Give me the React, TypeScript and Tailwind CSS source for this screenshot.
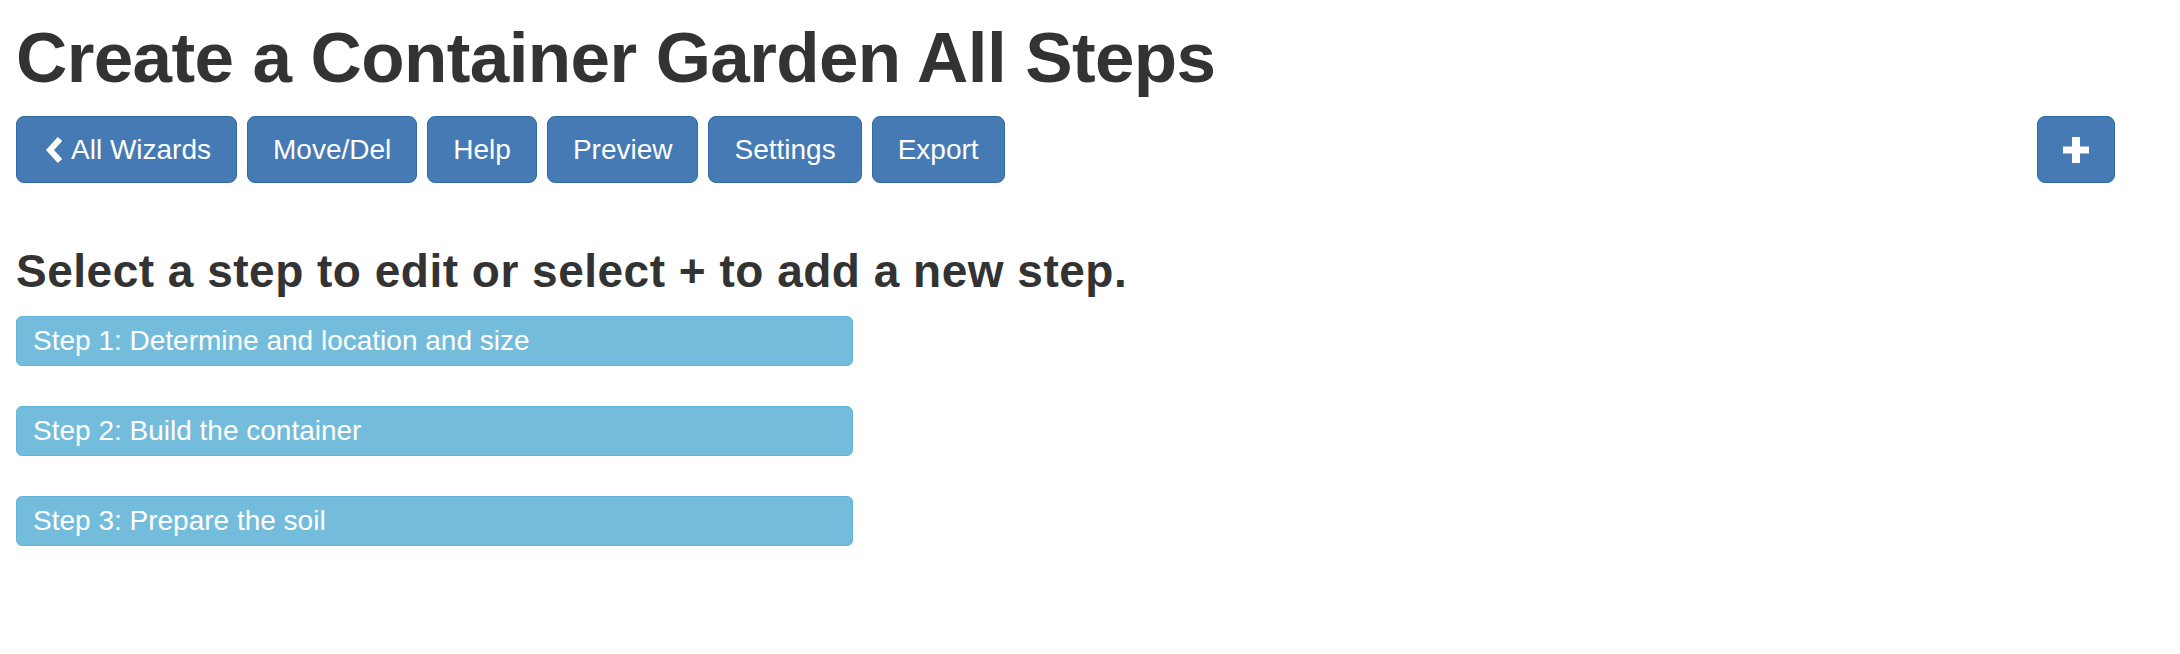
const buttons = ["Move/Del", "Help", "Preview", "Settings", "Export"];

const steps = [
  "Step 1: Determine and location and size",
  "Step 2: Build the container",
  "Step 3: Prepare the soil",
];

const btn =
  "h-[67px] px-[25px] flex items-center rounded-[8px] border border-[#2e6da4] bg-[#457ab4] text-white text-[28px] leading-none";

export default function App() {
  return (
    <div className="min-h-screen bg-white pl-4 pr-[65px] pt-[19px] text-[#333] font-['Liberation_Sans',Arial,sans-serif]">
      <h1 className="text-[71px] leading-[78px] font-bold tracking-[-0.6px]">Create a Container Garden All Steps</h1>

      {/* Toolbar */}
      <div className="mt-[19px] flex items-center justify-between">
        <div className="flex gap-[10px]">
          <button className={btn}>
            <svg width="20" height="26" viewBox="0 0 20 26" className="ml-[3px] mr-[6px]">
              <polyline points="15,2 5,13 15,24" fill="none" stroke="white" strokeWidth="6" />
            </svg>
            All Wizards
          </button>
          {buttons.map((b) => (
            <button key={b} className={btn}>
              {b}
            </button>
          ))}
        </div>
        <button className={`${btn} w-[78px] justify-center px-0`}>
          <svg width="26" height="26" viewBox="0 0 26 26">
            <rect x="9" y="0" width="8" height="26" fill="white" />
            <rect x="0" y="9.5" width="26" height="7" fill="white" />
          </svg>
        </button>
      </div>

      <h2 className="mt-[63px] text-[46px] leading-[50px] font-bold tracking-[0.5px]">
        Select a step to edit or select + to add a new step.
      </h2>

      <div className="mt-[20px] flex flex-col gap-[40px] w-[837px]">
        {steps.map((s) => (
          <div
            key={s}
            className="h-[50px] flex items-center px-4 rounded-[6px] border border-[#62b4d8] bg-[#74bcdb] text-white text-[28px]"
          >
            {s}
          </div>
        ))}
      </div>
    </div>
  );
}
